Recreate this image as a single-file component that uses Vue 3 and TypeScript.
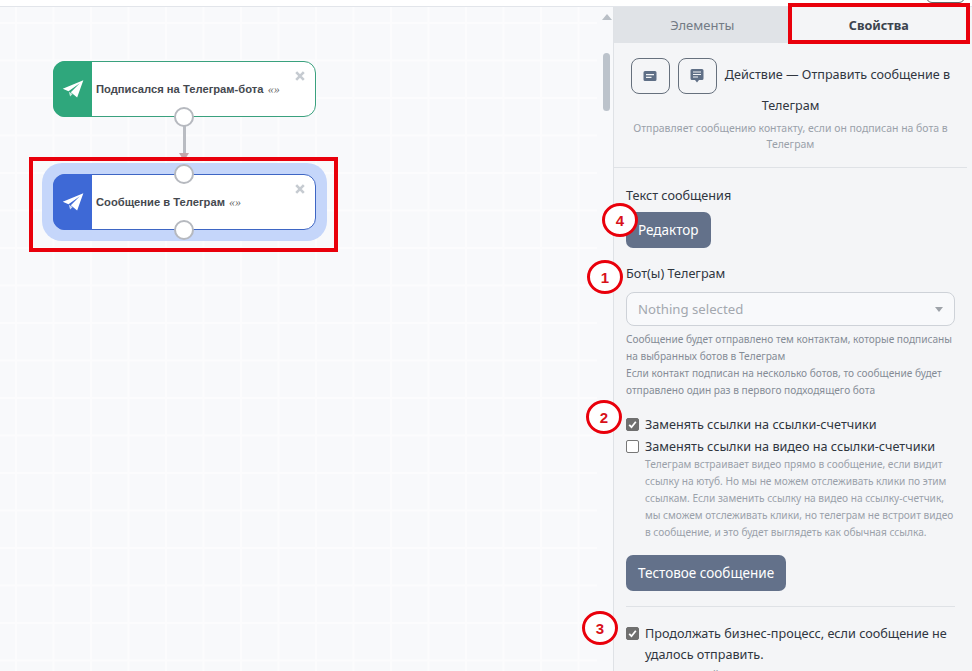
<script setup lang="ts">
const nodes = [
  { id: 1, title: 'Подписался на Телеграм-бота', kind: 'green', top: 61, hasIn: false },
  { id: 2, title: 'Сообщение в Телеграм', kind: 'blue', top: 174, hasIn: true }
]

const helpLines = [
  'Телеграм встраивает видео прямо в сообщение, если видит',
  'ссылку на ютуб. Но мы не можем отслеживать клики по этим',
  'ссылкам. Если заменить ссылку на видео на ссылку-счетчик,',
  'мы сможем отслеживать клики, но телеграм не встроит видео',
  'в сообщение, и это будет выглядеть как обычная ссылка.'
]

const marks = [
  { n: 4, x: 620, y: 220 },
  { n: 1, x: 605, y: 277 },
  { n: 2, x: 604, y: 417 },
  { n: 3, x: 600, y: 628 }
]
</script>

<template>
  <div class="page">
    <div class="topbar"><span class="top-btn"></span></div>
    <div class="main">
      <div class="canvas">
        <div class="halo"></div>
        <div class="wire"></div>
        <div class="wire-tip"></div>
        <div v-for="n in nodes" :key="n.id" class="node" :class="n.kind" :style="{ top: n.top + 'px' }">
          <div class="node-icon">
            <svg width="22" height="18" viewBox="0 0 24 20">
              <path d="M23.500 0.400 L0.600 9.600 L7 12.400 L19.500 3.600 L9.600 13.600 L16.600 19.400 Z" fill="#fff" />
              <path d="M7.400 13 L8.800 18.400 L11.600 15.600 Z" fill="#fff" opacity=".75" />
            </svg>
          </div>
          <div class="node-title">{{ n.title }} <i>«»</i></div>
          <svg class="node-close" width="10" height="10" viewBox="0 0 10 10">
            <path d="M1.200 1.200 8.800 8.800M8.800 1.200 1.200 8.800" stroke="#c6cbd1" stroke-width="2.600" />
          </svg>
          <span v-if="n.hasIn" class="handle handle-top"></span>
          <span class="handle handle-bottom"></span>
        </div>
        <div class="redbox node-box"></div>
      </div>
      <div class="scroll">
        <span class="scroll-up"></span>
        <span class="scroll-thumb"></span>
      </div>
      <div class="panel">
        <div class="tabs">
          <div class="tab">Элементы</div>
          <div class="tab active">Свойства</div>
        </div>
        <div class="head">
          <div class="head-line">
            <span class="icon-btn">
              <svg width="14" height="12" viewBox="0 0 14 12"><path d="M2 1h10a1.500 1.500 0 0 1 1.500 1.500v7A1.500 1.500 0 0 1 12 11H2A1.500 1.500 0 0 1 .5 9.500v-7A1.500 1.500 0 0 1 2 1z" fill="#5f6f86" /><path d="M3 4.600h8M3 7.400h5.500" stroke="#f4f5f7" stroke-width="1.100" /></svg>
            </span>
            <span class="icon-btn">
              <svg width="14" height="16" viewBox="0 0 14 16"><path d="M2 1h10a1.500 1.500 0 0 1 1.500 1.500v8A1.500 1.500 0 0 1 12 12H9l-2 2.500L5 12H2A1.500 1.500 0 0 1 .5 10.500v-8A1.500 1.500 0 0 1 2 1z" fill="#5f6f86" /><path d="M3 4h8M3 6.500h8M3 9h5" stroke="#f4f5f7" stroke-width="1" /></svg>
            </span>
            <span class="head-title">Действие — Отправить сообщение в Телеграм</span>
          </div>
          <p class="head-sub">Отправляет сообщению контакту, если он подписан на бота в Телеграм</p>
        </div>
        <div class="form">
          <label class="label">Текст сообщения</label>
          <button class="btn">Редактор</button>
          <label class="label bots">Бот(ы) Телеграм</label>
          <div class="select">
            <span>Nothing selected</span>
            <span class="caret"></span>
          </div>
          <p class="help help-bots">
            Сообщение будет отправлено тем контактам, которые подписаны<br />
            на выбранных ботов в Телеграм<br />
            Если контакт подписан на несколько ботов, то сообщение будет<br />
            отправлено один раз в первого подходящего бота
          </p>
          <div class="check first">
            <span class="box on">
              <svg width="9" height="9" viewBox="0 0 9 9"><path d="M1.200 4.800 3.500 7.200 7.800 1.800" fill="none" stroke="#fff" stroke-width="1.800" /></svg>
            </span>
            <span>Заменять ссылки на ссылки-счетчики</span>
          </div>
          <div class="check second">
            <span class="box"></span>
            <span>Заменять ссылки на видео на ссылки-счетчики</span>
          </div>
          <p class="help help-check">
            <template v-for="l in helpLines" :key="l">{{ l }}<br /></template>
          </p>
          <button class="btn test">Тестовое сообщение</button>
          <hr class="sep" />
          <div class="check third">
            <span class="box on">
              <svg width="9" height="9" viewBox="0 0 9 9"><path d="M1.200 4.800 3.500 7.200 7.800 1.800" fill="none" stroke="#fff" stroke-width="1.800" /></svg>
            </span>
            <span>Продолжать бизнес-процесс, если сообщение не<br />удалось отправить.<br />Контакт пойдет дальше по ветке ТБ</span>
          </div>
        </div>
      </div>
    </div>
    <div class="redbox tab-box"></div>
    <span v-for="m in marks" :key="m.n" class="mark" :style="{ left: m.x - 18 + 'px', top: m.y - 17 + 'px' }">{{ m.n }}</span>
  </div>
</template>

<style scoped>
.page {
  position: relative;
  width: 972px;
  height: 671px;
  overflow: hidden;
  background: #fff;
  font-family: "Noto Sans", sans-serif;
  color: #2f3640;
}

.topbar {
  height: 6px;
  border-bottom: 1px solid #e2e5ea;
  position: relative;
}

.top-btn {
  position: absolute;
  left: 926px;
  top: -14px;
  width: 37px;
  height: 15px;
  border: 1px solid #666;
  border-radius: 6px;
}

.main {
  display: flex;
  height: 664px;
}

.canvas {
  position: relative;
  width: 597px;
  flex: none;
  background-color: #f8f9fb;
  background-image:
    linear-gradient(#fcfcfd 2px, transparent 2px),
    linear-gradient(90deg, #fcfcfd 2px, transparent 2px);
  background-size: 37.5px 37.5px;
  background-position: 15px 15px;
}

.halo {
  position: absolute;
  left: 42px;
  top: 156px;
  width: 285px;
  height: 78px;
  border-radius: 20px;
  background: #c5d6fa;
}

.wire {
  position: absolute;
  left: 183px;
  top: 118px;
  width: 3px;
  height: 32px;
  background: #b9bcc2;
}

.wire-tip {
  position: absolute;
  left: 179px;
  top: 146px;
  border: 5px solid transparent;
  border-bottom: 0;
  border-top: 8px solid #c4a6aa;
}

.node {
  position: absolute;
  left: 53px;
  width: 263px;
  height: 56px;
  margin-top: -7px;
  box-sizing: border-box;
  display: flex;
  background: #fff;
  border: 1px solid #3aa17e;
  border-radius: 12px;
  font-family: "Liberation Sans", sans-serif;
}

.node.blue {
  border-color: #3e66c4;
}

.node-icon {
  width: 39px;
  margin: -1px 0 -1px -1px;
  display: flex;
  align-items: center;
  justify-content: center;
  border-radius: 12px 0 0 12px;
  background: #2fa77c;
}

.blue .node-icon {
  background: #3e69d6;
}

.node-title {
  align-self: center;
  margin-left: 4px;
  font-size: 11.2px;
  font-weight: 700;
  color: #45494f;
}

.node-title i {
  font-family: "Liberation Serif", serif;
  font-size: 12px;
  font-weight: 400;
  color: #666;
  margin-left: 1px;
}

.node-close {
  position: absolute;
  right: 10px;
  top: 9px;
}

.handle {
  position: absolute;
  left: 120px;
  width: 20px;
  height: 20px;
  box-sizing: border-box;
  background: #fff;
  border: 2px solid #b6b9bf;
  border-radius: 50%;
}

.handle-top {
  top: -11px;
}

.handle-bottom {
  bottom: -11px;
}

.redbox {
  position: absolute;
  box-sizing: border-box;
  border: 4px solid #e9000b;
  pointer-events: none;
}

.node-box {
  left: 29px;
  top: 150px;
  width: 309px;
  height: 95px;
}

.tab-box {
  left: 788px;
  top: 3px;
  width: 182px;
  height: 41px;
}

.scroll {
  position: relative;
  width: 16px;
  flex: none;
  background: #f8f9fb;
}

.scroll-up {
  position: absolute;
  left: 5px;
  top: 7px;
  border: 5px solid transparent;
  border-top: 0;
  border-bottom: 6px solid #b9bfc6;
}

.scroll-thumb {
  position: absolute;
  left: 6px;
  top: 46px;
  width: 7px;
  height: 58px;
  border-radius: 4px;
  background: #bcc3cb;
}

.panel {
  flex: 1;
  min-width: 0;
  background: #f4f5f7;
  border-left: 1px solid #dfe2e6;
}

.tabs {
  display: flex;
  height: 36px;
  margin-right: 5px;
  background: #e0e3e7;
}

.tab {
  flex: 1;
  display: flex;
  align-items: center;
  justify-content: center;
  font-size: 13px;
  color: #737b85;
}

.tab.active {
  background: #f4f5f7;
  font-size: 12.6px;
  font-weight: 700;
  color: #3c444e;
}

.head {
  margin: 0 5px 0 0;
  padding: 15px 10px 15px;
  text-align: center;
  border-bottom: 1px solid #dfe2e6;
}

.head-line {
  font-size: 12.6px;
  line-height: 23px;
  color: #30363f;
}

.icon-btn {
  display: inline-flex;
  align-items: center;
  justify-content: center;
  width: 39px;
  height: 36px;
  box-sizing: border-box;
  margin-right: 8px;
  vertical-align: middle;
  border: 1px solid #66707d;
  border-radius: 8px;
}

.head-sub {
  margin: 3px 0 0;
  font-size: 10.45px;
  line-height: 16px;
  color: #9aa1aa;
}

.form {
  display: flex;
  flex-direction: column;
  align-items: flex-start;
  padding: 17px 17px 0 12px;
}

.label {
  font-size: 12.65px;
  line-height: 20px;
  color: #30363f;
}

.btn {
  margin-top: 7px;
  height: 36px;
  padding: 0 12px;
  border: 0;
  border-radius: 7px;
  background: #63718a;
  color: #fff;
  font-family: inherit;
  font-size: 13.5px;
}

.bots {
  margin-top: 15px;
}

.select {
  width: 100%;
  height: 34px;
  margin-top: 9px;
  box-sizing: border-box;
  padding: 0 11px;
  display: flex;
  align-items: center;
  justify-content: space-between;
  border: 1px solid #ced2d8;
  border-radius: 8px;
  background: #f8f9fb;
  font-size: 13.2px;
  color: #a3a8af;
}

.caret {
  border: 4px solid transparent;
  border-bottom: 0;
  border-top: 5px solid #9ea3a9;
}

.help {
  margin: 0;
  font-size: 10.15px;
  line-height: 17px;
  color: #858c96;
  white-space: nowrap;
}

.help-bots {
  margin-top: 5px;
}

.check {
  display: flex;
  align-items: flex-start;
  gap: 6px;
  font-size: 12.65px;
  line-height: 21px;
  color: #30363f;
}

.check.first {
  margin-top: 15px;
}

.check.second {
  margin-top: 1px;
}

.check.third {
  margin-top: 16px;
}

.box {
  flex: none;
  width: 13px;
  height: 13px;
  margin-top: 4px;
  box-sizing: border-box;
  display: flex;
  align-items: center;
  justify-content: center;
  border: 1px solid #777;
  border-radius: 2px;
  background: #fff;
}

.box.on {
  border-color: #6f6f6f;
  background: #6f6f6f;
}

.help-check {
  margin: -1px 0 0 19px;
  color: #9aa1aa;
}

.test {
  margin-top: 14px;
}

.sep {
  width: 100%;
  margin: 15px 0 0;
  border: 0;
  border-top: 1px solid #dfe2e6;
}

.mark {
  position: absolute;
  width: 36px;
  height: 34px;
  box-sizing: border-box;
  display: flex;
  align-items: center;
  justify-content: center;
  border: 3.5px solid #e9000b;
  border-radius: 50%;
  background: #fff;
  font-family: "Liberation Sans", sans-serif;
  font-size: 15px;
  font-weight: 700;
  color: #d8111a;
}
</style>
